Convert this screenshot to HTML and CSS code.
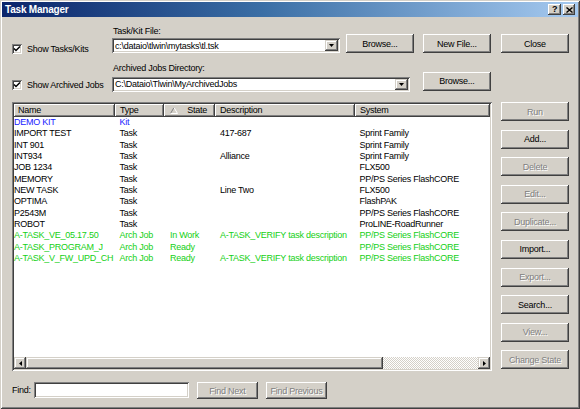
FILE: index.html
```html
<!DOCTYPE html>
<html>
<head>
<meta charset="utf-8">
<link rel="stylesheet" href="styles.css">
</head>
<body>
<div class="window">
  <div class="titlebar">
    <span class="title">Task Manager</span>
    <div class="tb-buttons">
      <span class="tb-btn tb-help">?</span>
      <span class="tb-btn tb-close"><svg width="7" height="6" viewBox="0 0 7 6"><path d="M0.5 0.5 L6.5 5.5 M6.5 0.5 L0.5 5.5" stroke="#000" stroke-width="1.4"/></svg></span>
    </div>
  </div>
  <div class="content">
    <div class="top-row row-a">
      <div class="check check-a"><span class="box"><svg width="8" height="8" viewBox="0 0 8 8"><path d="M1 3.5 L3 5.5 L7 1.5" fill="none" stroke="#000" stroke-width="1.5"/></svg></span>Show Tasks/Kits</div>
      <div class="field-group">
        <div class="label label-a">Task/Kit File:</div>
        <div class="combo combo-a"><span class="combo-text">c:\dataio\tlwin\mytasks\tl.tsk</span><span class="drop"><svg width="5" height="3" viewBox="0 0 5 3"><path d="M0 0 H5 L2.5 3 Z" fill="#000"/></svg></span></div>
      </div>
      <button class="btn browse-a">Browse...</button>
      <button class="btn newfile">New File...</button>
      <button class="btn close">Close</button>
    </div>
    <div class="top-row row-b">
      <div class="check check-b"><span class="box"><svg width="8" height="8" viewBox="0 0 8 8"><path d="M1 3.5 L3 5.5 L7 1.5" fill="none" stroke="#000" stroke-width="1.5"/></svg></span>Show Archived Jobs</div>
      <div class="field-group">
        <div class="label label-b">Archived Jobs Directory:</div>
        <div class="combo combo-b"><span class="combo-text">C:\Dataio\Tlwin\MyArchivedJobs</span><span class="drop"><svg width="5" height="3" viewBox="0 0 5 3"><path d="M0 0 H5 L2.5 3 Z" fill="#000"/></svg></span></div>
      </div>
      <button class="btn browse-b">Browse...</button>
    </div>
    <div class="main">
      <div class="list">
        <div class="list-header">
          <div class="hcell">Name</div>
          <div class="hcell">Type</div>
          <div class="hcell hstate"><svg class="sort" width="8" height="7" viewBox="0 0 8 7"><path d="M0.5 6.5 L4 0.5" stroke="#808080" fill="none"/><path d="M4 0.5 L7.5 6.5 L0.5 6.5" stroke="#fff" fill="none"/></svg><span>State</span></div>
          <div class="hcell">Description</div>
          <div class="hcell">System</div>
        </div>
        <div class="list-body">
          <div class="row kit"><span>DEMO KIT</span><span>Kit</span><span></span><span></span><span></span></div>
          <div class="row"><span>IMPORT TEST</span><span>Task</span><span></span><span>417-687</span><span>Sprint Family</span></div>
          <div class="row"><span>INT 901</span><span>Task</span><span></span><span></span><span>Sprint Family</span></div>
          <div class="row"><span>INT934</span><span>Task</span><span></span><span>Alliance</span><span>Sprint Family</span></div>
          <div class="row"><span>JOB 1234</span><span>Task</span><span></span><span></span><span>FLX500</span></div>
          <div class="row"><span>MEMORY</span><span>Task</span><span></span><span></span><span>PP/PS Series FlashCORE</span></div>
          <div class="row"><span>NEW TASK</span><span>Task</span><span></span><span>Line Two</span><span>FLX500</span></div>
          <div class="row"><span>OPTIMA</span><span>Task</span><span></span><span></span><span>FlashPAK</span></div>
          <div class="row"><span>P2543M</span><span>Task</span><span></span><span></span><span>PP/PS Series FlashCORE</span></div>
          <div class="row"><span>ROBOT</span><span>Task</span><span></span><span></span><span>ProLINE-RoadRunner</span></div>
          <div class="row arch"><span>A-TASK_VE_05.17.50</span><span>Arch Job</span><span>In Work</span><span>A-TASK_VERIFY task description</span><span>PP/PS Series FlashCORE</span></div>
          <div class="row arch"><span>A-TASK_PROGRAM_J</span><span>Arch Job</span><span>Ready</span><span></span><span>PP/PS Series FlashCORE</span></div>
          <div class="row arch"><span>A-TASK_V_FW_UPD_CH</span><span>Arch Job</span><span>Ready</span><span>A-TASK_VERIFY task description</span><span>PP/PS Series FlashCORE</span></div>
        </div>
        <div class="hscroll">
          <span class="arrow"><svg width="3" height="5" viewBox="0 0 3 5"><path d="M3 0 V5 L0 2.5 Z" fill="#000"/></svg></span>
          <span class="thumb"></span>
          <span class="track"></span>
          <span class="arrow"><svg width="3" height="5" viewBox="0 0 3 5"><path d="M0 0 V5 L3 2.5 Z" fill="#000"/></svg></span>
        </div>
      </div>
      <div class="side">
        <button class="btn disabled">Run</button>
        <button class="btn">Add...</button>
        <button class="btn disabled">Delete</button>
        <button class="btn disabled">Edit...</button>
        <button class="btn disabled">Duplicate...</button>
        <button class="btn">Import...</button>
        <button class="btn disabled">Export...</button>
        <button class="btn">Search...</button>
        <button class="btn disabled">View...</button>
        <button class="btn disabled">Change State</button>
      </div>
    </div>
    <div class="find-row">
      <span class="find-label">Find:</span>
      <span class="find-input"></span>
      <button class="btn disabled find-btn">Find Next</button>
      <button class="btn disabled find-btn">Find Previous</button>
    </div>
  </div>
</div>
</body>
</html>
```
FILE: styles.css
```css
html, body {
  margin: 0;
  padding: 0;
  background: #d4d0c8;
  overflow: hidden;
}
.window {
  width: 580px;
  height: 409px;
  box-sizing: border-box;
  background: #d4d0c8;
  box-shadow: inset 1px 1px #d4d0c8, inset -1px -1px #404040, inset 2px 2px #ffffff, inset -2px -2px #808080;
  font-family: "Liberation Sans", Arial, sans-serif;
  font-size: 9px;
  letter-spacing: -0.25px;
  color: #000;
  display: flex;
  flex-direction: column;
}
.titlebar {
  margin: 2px 2px 0 2px;
  height: 15px;
  background: linear-gradient(to right, #0a246a, #3a6ea5 45%, #a6caf0);
  display: flex;
  align-items: center;
  justify-content: space-between;
}
.title {
  color: #fff;
  font-weight: bold;
  font-size: 10px;
  letter-spacing: -0.2px;
  padding-left: 3px;
}
.tb-buttons {
  display: flex;
  gap: 2px;
  padding-right: 3px;
}
.tb-btn {
  width: 13px;
  height: 11px;
  background: #d4d0c8;
  box-shadow: inset -1px -1px #404040, inset 1px 1px #fff, inset -2px -2px #808080;
  display: flex;
  align-items: center;
  justify-content: center;
  font-weight: bold;
  font-size: 9px;
  line-height: 11px;
}
.tb-close {
  width: 12px;
}
.content {
  padding: 8.5px 0 0 12px;
  display: flex;
  flex-direction: column;
}
.top-row {
  display: flex;
  align-items: flex-end;
}
.row-b {
  margin-top: 9.5px;
}
.check {
  width: 100px;
  height: 10px;
  display: flex;
  align-items: center;
  gap: 5px;
  white-space: nowrap;
}
.check-a {
  margin-bottom: -1px;
}
.check-b {
  margin-bottom: 1.5px;
}
.box {
  width: 10px;
  height: 10px;
  box-sizing: border-box;
  background: #fff;
  box-shadow: inset 1px 1px #808080, inset -1px -1px #fff, inset 2px 2px #404040, inset -2px -2px #d4d0c8;
  display: flex;
  align-items: center;
  justify-content: center;
  flex: none;
}
.field-group {
  display: flex;
  flex-direction: column;
}
.label {
  line-height: 11px;
  padding-left: 1px;
  white-space: nowrap;
}
.label-a {
  margin-bottom: 1.5px;
}
.label-b {
  margin-bottom: 3px;
}
.combo {
  height: 15px;
  box-sizing: border-box;
  background: #fff;
  box-shadow: inset 1px 1px #808080, inset -1px -1px #fff, inset 2px 2px #404040, inset -2px -2px #d4d0c8;
  display: flex;
  align-items: center;
  padding: 2px;
}
.combo-a {
  width: 228px;
}
.combo-b {
  width: 298px;
}
.combo-text {
  flex: 1;
  padding-left: 1px;
  white-space: nowrap;
  overflow: hidden;
}
.drop {
  width: 13px;
  height: 11px;
  background: #d4d0c8;
  box-shadow: inset -1px -1px #404040, inset 1px 1px #d4d0c8, inset -2px -2px #808080, inset 2px 2px #fff;
  display: flex;
  align-items: center;
  justify-content: center;
}
.btn {
  width: 68px;
  height: 19px;
  padding: 0;
  border: none;
  background: #d4d0c8;
  box-shadow: inset -1px -1px #404040, inset 1px 1px #fff, inset -2px -2px #808080, inset 2px 2px #d4d0c8;
  font-family: "Liberation Sans", Arial, sans-serif;
  font-size: 9px;
  letter-spacing: -0.25px;
  color: #000;
  text-align: center;
  white-space: nowrap;
  flex: none;
}
.btn.disabled {
  color: #808080;
  text-shadow: 1px 1px #fff;
}
.browse-a {
  margin-left: 6px;
}
.newfile {
  margin-left: 9px;
}
.close {
  margin-left: 10px;
}
.browse-b {
  margin-left: 13px;
  margin-bottom: 1px;
  height: 18.5px;
}
.main {
  margin-top: 10.5px;
  height: 269px;
  display: flex;
  gap: 9px;
}
.list {
  width: 480px;
  height: 269px;
  box-sizing: border-box;
  padding: 2px;
  background: #fff;
  box-shadow: inset 1px 1px #808080, inset -1px -1px #fff, inset 2px 2px #404040, inset -2px -2px #d4d0c8;
  display: flex;
  flex-direction: column;
  overflow: hidden;
}
.list-header,
.row {
  display: grid;
  grid-template-columns: 101px 49px 51px 140px 1fr;
}
.list-header {
  height: 13px;
  flex: none;
}
.hcell {
  background: #d4d0c8;
  box-shadow: inset -1px -1px #404040, inset 1px 1px #fff, inset -2px -2px #808080;
  line-height: 13px;
  padding-left: 4px;
  white-space: nowrap;
  overflow: hidden;
}
.hcell:nth-child(2),
.hcell:nth-child(4),
.hcell:nth-child(5) {
  padding-left: 5px;
}
.hstate {
  display: flex;
  align-items: center;
  padding-left: 6px;
  padding-right: 8px;
}
.hstate span {
  margin-left: auto;
}
.sort {
  display: block;
}
.list-body {
  flex: 1;
  overflow: hidden;
}
.row {
  height: 11.33px;
  line-height: 11.33px;
}
.row span {
  white-space: nowrap;
  overflow: hidden;
}
.row span:nth-child(1) {
  padding-left: 0;
}
.row span:nth-child(2) {
  padding-left: 4.5px;
}
.row span:nth-child(3) {
  padding-left: 6px;
}
.row span:nth-child(4) {
  padding-left: 5px;
}
.row span:nth-child(5) {
  padding-left: 4.5px;
}
.row.kit {
  color: #1a1aff;
}
.row.arch {
  color: #14d014;
}
.hscroll {
  height: 12px;
  flex: none;
  display: flex;
}
.arrow {
  width: 12px;
  height: 12px;
  background: #d4d0c8;
  box-shadow: inset -1px -1px #404040, inset 1px 1px #d4d0c8, inset -2px -2px #808080, inset 2px 2px #fff;
  display: flex;
  align-items: center;
  justify-content: center;
  flex: none;
}
.thumb {
  width: 357px;
  height: 12px;
  background: #d4d0c8;
  box-shadow: inset -1px -1px #404040, inset 1px 1px #d4d0c8, inset -2px -2px #808080, inset 2px 2px #fff;
  flex: none;
}
.track {
  flex: 1;
  background: repeating-conic-gradient(#ffffff 0 25%, #d4d0c8 0 50%) 0 0 / 2px 2px;
}
.side {
  width: 68px;
  display: flex;
  flex-direction: column;
  gap: 8.6px;
}
.find-row {
  margin-top: 11px;
  display: flex;
  align-items: flex-start;
}
.find-label {
  width: 22px;
  line-height: 16px;
}
.find-input {
  width: 155px;
  height: 16px;
  box-sizing: border-box;
  background: #fff;
  box-shadow: inset 1px 1px #808080, inset -1px -1px #fff, inset 2px 2px #404040, inset -2px -2px #d4d0c8;
}
.find-btn {
  width: 61px;
  height: 17px;
  margin-left: 8px;
}
```
